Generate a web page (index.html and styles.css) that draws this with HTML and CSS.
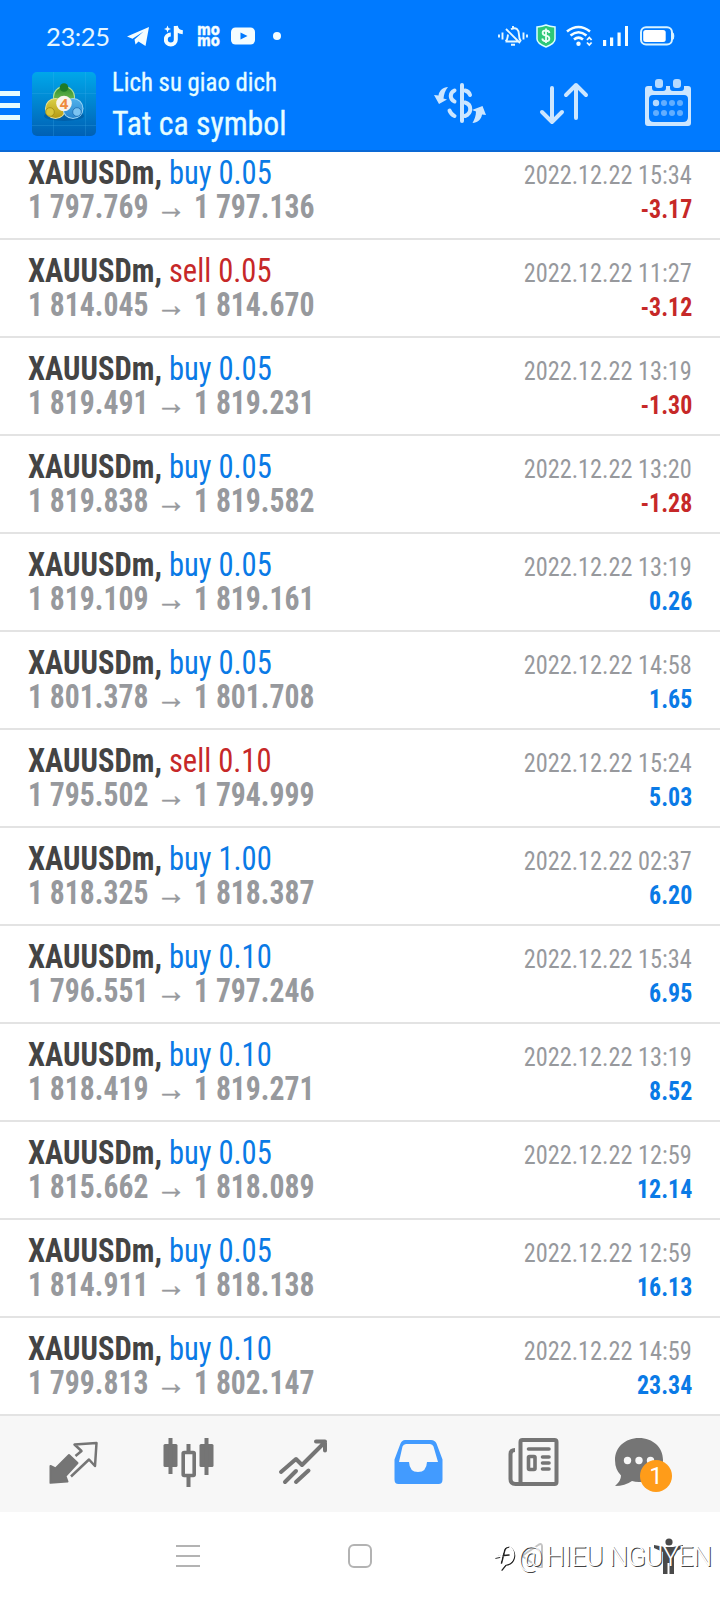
FILE: index.html
```
<!DOCTYPE html>
<html lang="vi">
<head>
<meta charset="utf-8">
<title>Lich su giao dich</title>
<link rel="stylesheet" href="styles.css">
</head>
<body>
<div class="phone">
  <header class="header">
    <div class="status">
      <span class="clock">23:25</span>
      <svg class="s-telegram" width="24" height="24" viewBox="126 24 24 24"><path fill="#f4fdff" d="M127 36.500 149 27 145.500 46 138.500 41.500 135.500 44.500 134.500 39.500 143.500 31.500 132.500 38.800Z"/></svg>
      <svg class="s-tiktok" width="20" height="24" viewBox="164 24 20 24"><path fill="none" stroke="#f4fdff" stroke-width="4" d="M175.800 26v13.500a5 5 0 1 1-5-5M175.800 26c.5 4 3 6 7 6.200"/><path fill="#f4fdff" d="m167.500 25.500 1 2.500 2.500 1-2.500 1-1 2.500-1-2.500-2.500-1 2.500-1Z"/></svg>
      <svg class="s-momo" width="24" height="24" viewBox="197 24 24 24"><text x="197" y="35.300" textLength="23" lengthAdjust="spacingAndGlyphs">mo</text><text x="197" y="46.300" textLength="23" lengthAdjust="spacingAndGlyphs">mo</text></svg>
      <svg class="s-youtube" width="24" height="24" viewBox="231 24 24 24"><rect x="231" y="27.500" width="24" height="17" rx="4.500" fill="#f4fdff"/><path fill="#007aff" d="m240.500 32.500 7 3.500-7 3.500Z"/></svg>
      <span class="s-dot"></span>
      <span class="grow"></span>
      <svg class="s-bell" width="30" height="24" viewBox="498 24 30 24"><g fill="none" stroke="#e6f8ff" stroke-width="1.900"><path d="M499 34.500v3M502.500 32.500v7M523.500 32.500v7M527 34.500v3M505.500 41.500c2.500-2 2-4 2.500-7M511 29.300c5-3 8 .5 8 5.500 0 4 .5 5 2 6.700M505.500 41.500H518M506 29l14 14M513 26v2.500M511 44.700h4"/></g></svg>
      <svg class="s-shield" width="20" height="24" viewBox="536 24 20 24"><path fill="#2ec878" stroke="#d9ffff" stroke-width="1.500" d="M546 25c3 1.300 6 1.800 9 2v12c0 4-4 6-9 8-5-2-9-4-9-8V27c3-.2 6-.7 9-2Z"/><path fill="none" stroke="#eafff5" stroke-width="1.800" d="M549.500 33c-.5-2-2-2.500-3.500-2.500-4.500 0-4.500 4.500 0 5.200s4.500 5.500 0 5.500c-2 0-3.500-1-3.800-2.700M546 28.500V43"/></svg>
      <svg class="s-wifi" width="27" height="24" viewBox="566 24 27 24"><g fill="none" stroke="#f4fdff" stroke-width="2.600"><path d="M567 31.500q11.500-9 23 0M570.500 35.500q8-6.500 16 0M574 39.500q4.500-3.800 9 0"/><path stroke-width="1.800" d="m587 40 2.300-2.500 2.300 2.500M587 42.500l2.300 2.500 2.300-2.500"/></g><circle cx="578.500" cy="43.800" r="2.200" fill="#f4fdff"/></svg>
      <svg class="s-signal" width="26" height="24" viewBox="603 24 26 24"><path fill="#f4fdff" d="M603 40h3.200v6H603zM610 37.500h3.200V46H610zM617.500 32.500h3.200V46h-3.200zM625 26h3v20h-3z"/></svg>
      <svg class="s-battery" width="35" height="24" viewBox="640 24 35 24"><rect x="641" y="27.200" width="31" height="17.300" rx="5" fill="none" stroke="#d9f3ff" stroke-width="2"/><rect x="643.200" y="30" width="22.500" height="12" rx="2.500" fill="#fff"/><path fill="#d9f3ff" d="M672.500 32q2 1 1.800 4 .2 3-1.800 4Z"/></svg>
    </div>
    <div class="bar">
      <div class="menu"><i></i><i></i><i></i></div>
      <svg class="logo" width="64" height="64" viewBox="0 0 64 64">
        <defs>
          <linearGradient id="sky" x2="0" y2="1"><stop offset="0" stop-color="#00a7ea"/><stop offset="1" stop-color="#0060b4"/></linearGradient>
          <linearGradient id="green" x2="0" y2="1"><stop offset="0" stop-color="#2f8f2c"/><stop offset="1" stop-color="#8fcf63"/></linearGradient>
          <linearGradient id="gold" x2="0" y2="1"><stop offset="0" stop-color="#d9cf45"/><stop offset="1" stop-color="#b79a13"/></linearGradient>
          <linearGradient id="blue" x2="0" y2="1"><stop offset="0" stop-color="#4fb0ea"/><stop offset="1" stop-color="#2b87cf"/></linearGradient>
        </defs>
        <rect width="64" height="64" rx="5" fill="url(#sky)"/>
        <path stroke="#48b8f0" stroke-opacity=".22" d="M0 21.500h64M0 53.500h64M21.500 0v64M53.500 0v64"/>
        <ellipse cx="32" cy="44" rx="20" ry="5" fill="#04407c" opacity=".35"/>
        <circle cx="32" cy="25" r="11" fill="#b5e39a"/><circle cx="32" cy="25" r="10" fill="url(#green)"/>
        <circle cx="23.500" cy="36.500" r="10.500" fill="#e6e09a"/><circle cx="23.500" cy="36.500" r="9.500" fill="url(#gold)"/>
        <circle cx="41" cy="36.500" r="10.500" fill="#9ad4f5"/><circle cx="41" cy="36.500" r="9.500" fill="url(#blue)"/>
        <circle cx="32" cy="15.500" r="4.300" fill="#1f7b27"/><circle cx="18" cy="40" r="4.300" fill="#d8c63c" stroke="#9d8a14" stroke-width=".8"/><circle cx="45" cy="40" r="4.300" fill="#7cc4f2" stroke="#1c6cb0" stroke-width=".8"/>
        <circle cx="32" cy="31.500" r="7.800" fill="#f8f4ec"/>
        <text class="logo-num" x="32" y="37" text-anchor="middle">4</text>
      </svg>
      <div class="titles">
        <div class="sub">Lich su giao dich</div>
        <div class="main">Tat ca symbol</div>
      </div>
      <span class="grow"></span>
      <svg class="i-money" width="52" height="50" viewBox="434 77 52 50"><g fill="none" stroke="#cce6ff" stroke-width="4" stroke-linecap="round"><path d="M462 85v36"/><path d="M454.500 90.500c-5 2.500-5 8.500 0 11M449.500 110.500q1.500 4 5 5.500M465 90.500q4 1 5 4.500M465 102.500c7 2 7 11 0 13.500"/></g><path fill="#cce6ff" d="M448 87c-5 0-9 4-9.500 8.500L434 95l5 9 8-4.500-3.500-1c.5-4 1.500-8 4.500-11.500ZM472.500 123c5 0 9-4 9.500-8.500l4 .5-3.500-9-10.500 4 4 1.500c0 4-1.500 8-3.500 11.500Z"/></svg>
      <svg class="i-sort" width="50" height="50" viewBox="539 77 50 50"><path fill="none" stroke="#cce6ff" stroke-width="4" stroke-linecap="round" stroke-linejoin="round" d="M552 88v34M542 112l10 10 10-10M576 118V85M566 95l10-10 10 10"/></svg>
      <svg class="i-cal" width="46" height="50" viewBox="645 77 46 50"><path fill="#cce6ff" fill-rule="evenodd" d="M648 86h4v2q0 3 3 3h8q3 0 3-3v-2h4v2q0 3 3 3h8q3 0 3-3v-2h4q3 0 3 3v34q0 3-3 3h-40q-3 0-3-3V89q0-3 3-3ZM653 95q-4 0-4 4v18q0 5 5 5h29q5 0 5-5V99q0-4-4-4Z"/><rect x="655" y="79" width="8" height="9" rx="3" fill="#b5daff"/><rect x="673" y="79" width="8" height="9" rx="3" fill="#b5daff"/><g fill="#62aeff"><circle cx="656" cy="103" r="3.200" fill="#b5daff"/><circle cx="664" cy="103" r="3"/><circle cx="672" cy="103" r="3"/><circle cx="680" cy="103" r="3"/><circle cx="656" cy="113" r="3"/><circle cx="664" cy="113" r="3"/><circle cx="672" cy="113" r="3"/><circle cx="680" cy="113" r="3"/></g></svg>
    </div>
  </header>

  <main class="list">
    <div class="row"><div class="left"><div class="name"><b>XAUUSDm,</b> <span class="buy">buy 0.05</span></div><div class="price">1 797.769 <span class="arr">→</span> 1 797.136</div></div><div class="right"><div class="date">2022.12.22 15:34</div><div class="pl loss">-3.17</div></div></div>
    <div class="row"><div class="left"><div class="name"><b>XAUUSDm,</b> <span class="sell">sell 0.05</span></div><div class="price">1 814.045 <span class="arr">→</span> 1 814.670</div></div><div class="right"><div class="date">2022.12.22 11:27</div><div class="pl loss">-3.12</div></div></div>
    <div class="row"><div class="left"><div class="name"><b>XAUUSDm,</b> <span class="buy">buy 0.05</span></div><div class="price">1 819.491 <span class="arr">→</span> 1 819.231</div></div><div class="right"><div class="date">2022.12.22 13:19</div><div class="pl loss">-1.30</div></div></div>
    <div class="row"><div class="left"><div class="name"><b>XAUUSDm,</b> <span class="buy">buy 0.05</span></div><div class="price">1 819.838 <span class="arr">→</span> 1 819.582</div></div><div class="right"><div class="date">2022.12.22 13:20</div><div class="pl loss">-1.28</div></div></div>
    <div class="row"><div class="left"><div class="name"><b>XAUUSDm,</b> <span class="buy">buy 0.05</span></div><div class="price">1 819.109 <span class="arr">→</span> 1 819.161</div></div><div class="right"><div class="date">2022.12.22 13:19</div><div class="pl">0.26</div></div></div>
    <div class="row"><div class="left"><div class="name"><b>XAUUSDm,</b> <span class="buy">buy 0.05</span></div><div class="price">1 801.378 <span class="arr">→</span> 1 801.708</div></div><div class="right"><div class="date">2022.12.22 14:58</div><div class="pl">1.65</div></div></div>
    <div class="row"><div class="left"><div class="name"><b>XAUUSDm,</b> <span class="sell">sell 0.10</span></div><div class="price">1 795.502 <span class="arr">→</span> 1 794.999</div></div><div class="right"><div class="date">2022.12.22 15:24</div><div class="pl">5.03</div></div></div>
    <div class="row"><div class="left"><div class="name"><b>XAUUSDm,</b> <span class="buy">buy 1.00</span></div><div class="price">1 818.325 <span class="arr">→</span> 1 818.387</div></div><div class="right"><div class="date">2022.12.22 02:37</div><div class="pl">6.20</div></div></div>
    <div class="row"><div class="left"><div class="name"><b>XAUUSDm,</b> <span class="buy">buy 0.10</span></div><div class="price">1 796.551 <span class="arr">→</span> 1 797.246</div></div><div class="right"><div class="date">2022.12.22 15:34</div><div class="pl">6.95</div></div></div>
    <div class="row"><div class="left"><div class="name"><b>XAUUSDm,</b> <span class="buy">buy 0.10</span></div><div class="price">1 818.419 <span class="arr">→</span> 1 819.271</div></div><div class="right"><div class="date">2022.12.22 13:19</div><div class="pl">8.52</div></div></div>
    <div class="row"><div class="left"><div class="name"><b>XAUUSDm,</b> <span class="buy">buy 0.05</span></div><div class="price">1 815.662 <span class="arr">→</span> 1 818.089</div></div><div class="right"><div class="date">2022.12.22 12:59</div><div class="pl">12.14</div></div></div>
    <div class="row"><div class="left"><div class="name"><b>XAUUSDm,</b> <span class="buy">buy 0.05</span></div><div class="price">1 814.911 <span class="arr">→</span> 1 818.138</div></div><div class="right"><div class="date">2022.12.22 12:59</div><div class="pl">16.13</div></div></div>
    <div class="row"><div class="left"><div class="name"><b>XAUUSDm,</b> <span class="buy">buy 0.10</span></div><div class="price">1 799.813 <span class="arr">→</span> 1 802.147</div></div><div class="right"><div class="date">2022.12.22 14:59</div><div class="pl">23.34</div></div></div>
  </main>

  <nav class="tabs">
    <svg width="60" height="60" viewBox="43 1431 60 60"><path fill="#757575" stroke="#757575" stroke-width="2" stroke-linejoin="round" d="m69 1455 8.500 8-12 13 2 5.500-17 1.300V1466l5 2.500Z"/><path fill="none" stroke="#757575" stroke-width="2.500" stroke-linejoin="round" d="m75.500 1456 6-5-7-6.500 22-1.500-1.500 23-6-6.500-18 17"/></svg>
    <svg width="60" height="60" viewBox="158 1431 60 60"><g fill="#757575"><rect x="163.500" y="1444" width="14" height="23" rx="1.500"/><rect x="199.500" y="1444" width="14" height="23" rx="1.500"/><path d="M168.500 1438h4v36h-4zM204.500 1438h4v37h-4zM186.500 1444h4v8h-4zM186.500 1476h4v11h-4z"/></g><rect x="183.200" y="1452.500" width="11" height="23" rx="1" fill="none" stroke="#757575" stroke-width="3.600"/></svg>
    <svg width="60" height="60" viewBox="272 1431 60 60"><path fill="none" stroke="#757575" stroke-width="4" stroke-linecap="round" stroke-linejoin="round" d="m281 1472 15-13 6 6 23-23M316 1441.500h9v9M285 1482l11-11M296 1482l12.500-11.500"/></svg>
    <svg width="60" height="60" viewBox="388 1431 60 60"><path fill="#429bff" fill-rule="evenodd" d="M405 1440h26q4 0 5.500 3.500l6 16v20q0 4.500-4 4.500h-40q-4 0-4-4.500v-20l6-16q1.500-3.500 4.500-3.500ZM406 1444q-2.500 0-3.500 2.500L399 1462h10q.5 10 9 10t9-10h11l-4.500-15.500q-1-2.500-3.500-2.500Z"/></svg>
    <svg width="60" height="60" viewBox="504 1431 60 60"><g fill="none" stroke="#757575" stroke-width="4" stroke-linejoin="round"><rect x="520.500" y="1440" width="36" height="44" rx="2"/><path d="M515 1450q-4.500 0-4.500 4v25q0 5 5 5h7"/></g><path stroke="#757575" stroke-width="3.600" stroke-linecap="round" d="M528.500 1449h20.500M542.500 1457h6.500M542.500 1463h6.500M542.500 1469h6.500"/><rect x="528.500" y="1456.500" width="6.500" height="13" rx="1" fill="none" stroke="#757575" stroke-width="3.600"/></svg>
    <div class="chat">
      <svg width="60" height="60" viewBox="610 1431 60 60"><path fill="#757575" d="M639 1438c14 0 24 9.500 24 22s-10 22-24 22q-4 0-7-1-7 5-17 5 6-5 6-10.500-6-6-6-15.500c0-12.500 10-22 24-22Z"/><g fill="#f7f7f7"><circle cx="627.500" cy="1460.500" r="3.700"/><circle cx="639" cy="1460.500" r="3.700"/><circle cx="650.500" cy="1460.500" r="3.700"/></g></svg>
      <span class="badge">1</span>
    </div>
  </nav>

  <footer class="sys">
    <svg width="24" height="24" viewBox="176 1544 24 24"><path stroke="#b3b3b3" stroke-width="2" d="M176 1546h24M176 1556h24M176 1566h24"/></svg>
    <svg class="home" width="24" height="24" viewBox="348 1544 24 24"><rect x="349" y="1545" width="22" height="22" rx="5" fill="none" stroke="#b3b3b3" stroke-width="2"/></svg>
    <svg class="back" width="24" height="26" viewBox="520 1542 24 26"><path fill="none" stroke="#c4c4c4" stroke-width="2" stroke-linejoin="round" d="M522 1556 539 1544.500q3-1.500 3 2v20q0 2-3 1Z"/></svg>
    <svg class="person" width="30" height="38" viewBox="653 1537 30 38"><g fill="#4a4a4a"><circle cx="669" cy="1542" r="3.600"/><path d="m654 1545 11 2h8l10-2v3l-9 4v22h-4.500v-11h-2v11H663v-22l-9-4Z"/></g></svg>
    <div class="mark"><svg width="24" height="30" viewBox="493 1543 24 30"><g fill="none" stroke-linecap="round" stroke-width="1.600"><path stroke="#222" d="M496 1559l5-1M501.500 1564l3-12q1-4 5-4M499 1557l10-1M511 1549c6 6 4 16-5 17l-4 5"/><path stroke="#fff" stroke-width="1.800" d="M495 1558l5-1M500 1563l3-12q1-4 5-4M510 1548c6 6 4 16-5 17l-4 5"/></g></svg><span class="at">@</span><span class="who">HIEU NGUYEN</span></div>
  </footer>
</div>
</body>
</html>
```
FILE: styles.css
```
* { box-sizing: border-box; }
body { margin: 0; background: #fff; font-family: "Roboto Condensed", Roboto, sans-serif; }
svg { display: block; flex: none; }
.phone { width: 720px; height: 1600px; display: flex; flex-direction: column; overflow: hidden; }
.grow { flex: 1; }

.header { height: 152px; background: #007aff; border-bottom: 2px solid #0a69d6; flex: none; }
.status { display: flex; align-items: center; height: 48px; padding: 24px 45px 0 46px; }
.clock { width: 80px; font: 400 25.5px/24px Lato, sans-serif; color: #e6f6ff; letter-spacing: -0.4px; white-space: nowrap; }
.s-tiktok { margin-left: 14px; }
.s-momo { margin-left: 13px; overflow: visible; }
.s-momo text { font: 700 16px "DejaVu Sans", sans-serif; fill: #f4fdff; stroke: #f4fdff; stroke-width: .4px; }
.s-youtube { margin-left: 10px; }
.s-dot { width: 8px; height: 8px; margin-left: 18px; border-radius: 50%; background: #f4fdff; }
.s-shield { margin-left: 8px; }
.s-wifi, .s-signal { margin-left: 10px; }
.s-battery { margin-left: 11px; }

.bar { display: flex; align-items: flex-start; padding: 19px 29px 0 0; }
.menu { display: flex; flex-direction: column; gap: 7px; width: 20px; margin: 24px 12px 0 0; }
.menu i { height: 5px; background: #e6fdff; }
.logo { margin-top: 5px; }
.logo-num { font: 700 15px "Open Sans", sans-serif; fill: #ef8a3c; }
.titles { margin-left: 16px; color: #e6fdff; white-space: nowrap; }
.sub, .main { -webkit-text-stroke: 0.3px; transform-origin: left; }
.sub { margin-top: -1px; font-size: 26px; line-height: 32px; transform: scaleX(.954); }
.main { font-size: 34px; line-height: 40px; margin-top: 5px; transform: scaleX(.935); }
.i-money, .i-sort, .i-cal { margin-top: 10px; }
.i-sort { margin-left: 53px; }
.i-cal { margin-left: 56px; }

.list { height: 1264px; flex: none; display: flex; flex-direction: column; justify-content: flex-end; overflow: hidden; }
.row { display: flex; justify-content: space-between; flex: none; height: 98px; padding: 14px 28px 0; border-bottom: 2px solid #e3e3e3; white-space: nowrap; }
.left { font-size: 32px; line-height: 34px; }
.name, .price { transform-origin: left; }
.name { color: #444; transform: scale(.955, 1.02); }
.name b { font-weight: 700; }
.buy, .pl { color: #0a7ae6; }
.sell { color: #c62828; }
.price { font-weight: 700; color: #97999d; transform: scale(.927, 1.02); }
.arr { font-weight: 400; margin: 0 1.5px 0 1px; -webkit-text-stroke: 0.5px; }
.right { padding-top: 2px; font-size: 26px; line-height: 34px; text-align: right; }
.date, .pl { transform-origin: right; }
.date { color: #97999d; transform: scaleX(.935); }
.pl { font-weight: 700; transform: translateX(.5px) scaleX(.92); }
.pl.loss { color: #c62828; }

.tabs { display: grid; grid-template-columns: 115px 114px 116px 116px 106px 60px; height: 96px; flex: none; padding: 15px 0 0 43px; background: #f7f7f7; }
.chat { position: relative; }
.badge { position: absolute; left: 30px; top: 29px; width: 32px; height: 32px; border-radius: 50%; background: #ff9c19; color: #fff; font: 400 24px/32px Roboto, sans-serif; text-align: center; }

.sys { position: relative; display: flex; height: 88px; flex: none; padding: 32px 0 0 176px; }
.home { margin-left: 148px; }
.back { margin: -2px 0 0 148px; }
.person { margin: -7px 0 0 109px; }
.mark { position: absolute; left: 493px; top: 30px; display: flex; color: #fff; font: 300 27px/30px Roboto, sans-serif; white-space: nowrap; text-shadow: 1px 1px 0 #444; }
.at { width: 28px; margin-left: 1px; }
.who { letter-spacing: -0.6px; }
```
